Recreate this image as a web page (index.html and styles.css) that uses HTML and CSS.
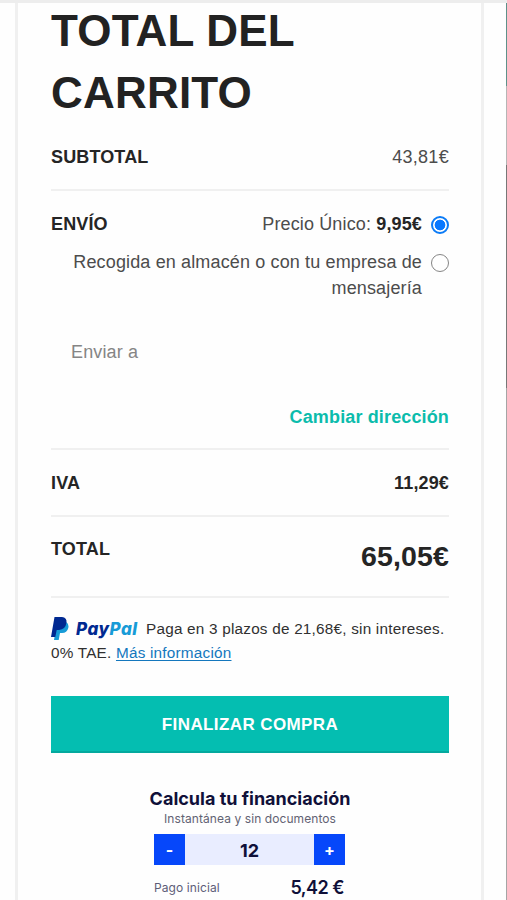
FILE: index.html
```html
<!DOCTYPE html>
<html lang="es">
<head>
<meta charset="utf-8">
<title>Total del carrito</title>
<link rel="stylesheet" href="styles.css">
</head>
<body>
<main class="page">
  <section class="cart">
    <h2 class="title">TOTAL DEL<br>CARRITO</h2>
    <div class="row subtotal"><span class="label">SUBTOTAL</span><span class="value">43,81€</span></div>
    <div class="row shipping">
      <span class="label">ENVÍO</span>
      <label class="option option-first"><span>Precio Único: <b>9,95€</b></span><i class="radio checked"></i></label>
      <label class="option option-second"><span>Recogida en almacén o con tu empresa de mensajería</span><i class="radio"></i></label>
      <p class="send">Enviar a</p>
      <a class="change">Cambiar dirección</a>
    </div>
    <div class="row iva"><span class="label">IVA</span><b class="value">11,29€</b></div>
    <div class="row total"><span class="label">TOTAL</span><b class="value grand">65,05€</b></div>
    <div class="paypal">
      <div class="pp-line">
        <svg class="pp-mark" width="18" height="23" viewBox="0 0 18 23"><path fill="#179bd7" d="M6 5h9q3.200 2 2.300 6-1.300 5-6.300 5H9l-1.300 7H3z"/><path fill="#002991" d="M3.500 0h7.500q5 .5 4.500 5.500-1 7-7.500 7.500H5.700L4.300 20H0z"/></svg>
        <span class="pp-word">Pay<em>Pal</em></span>
        <span>Paga en 3 plazos de 21,68€, sin intereses.</span>
      </div>
      <div class="pp-second">0% TAE. <a class="more">Más información</a></div>
    </div>
    <button class="checkout">FINALIZAR COMPRA</button>
    <div class="finance">
      <h3>Calcula tu financiación</h3>
      <p class="note">Instantánea y sin documentos</p>
      <div class="stepper"><span class="step">-</span><b class="months">12</b><span class="step">+</span></div>
      <div class="initial"><span class="initial-label">Pago inicial</span><b class="initial-value">5,42 €</b></div>
    </div>
  </section>
  <div class="edge"><i class="edge-top"></i><i class="edge-mid"></i></div>
</main>
</body>
</html>
```
FILE: styles.css
```css
* { box-sizing: border-box; }
body { margin: 0; background: #fefefe; font-family: "Liberation Sans", sans-serif; color: #4c4c4c; overflow: hidden; }
h2, h3, p { margin: 0; }
.page { width: 507px; height: 900px; padding-left: 15px; border-top: 3px solid #ededed; display: flex; justify-content: space-between; overflow: hidden; }
.cart { width: 469px; height: 897px; padding: 0 32px 0 33px; border-left: 3px solid #f0f0f0; border-right: 3px solid #f0f0f0; }
.title { height: 121px; margin-top: -3px; font-size: 44px; line-height: 62px; letter-spacing: .2px; color: #222; white-space: nowrap; }
.row { border-bottom: 2px solid #f0f0f0; font-size: 18px; line-height: 26px; letter-spacing: .14px; }
.subtotal, .iva, .total { display: flex; justify-content: space-between; }
.subtotal { height: 70px; padding-top: 23px; }
.subtotal .value { letter-spacing: .3px; }
.label, .row b { font-weight: 700; color: #252525; }
.shipping { height: 259px; padding-top: 20px; display: grid; grid-template-columns: 100px 1fr; align-content: start; }
.option { display: flex; justify-content: flex-end; gap: 9px; text-align: right; }
.option-second { grid-column: 1 / 3; margin-top: 12px; }
.option-second > span { width: 360px; }
.radio { width: 18px; height: 18px; margin-top: 5px; flex: none; border: 1.5px solid #858585; border-radius: 50%; background: #fff; }
.checked { border: 2px solid #0b7bf6; background: radial-gradient(circle, #0878ff 0 5px, #fff 5.700px); }
.send { grid-column: 1 / 3; margin: 38px 0 0 20px; color: #858585; }
.change { grid-column: 1 / 3; justify-self: end; margin-top: 39px; font-weight: 700; color: #0bbcac; }
.iva { height: 67px; padding-top: 20px; }
.total { height: 81px; padding-top: 19px; }
.total .grand { font-size: 28.500px; line-height: 41px; }
.paypal { height: 98px; padding-top: 18px; font-size: 15.300px; letter-spacing: .22px; color: #303030; white-space: nowrap; }
.pp-line { display: flex; line-height: 26px; }
.pp-mark { flex: none; margin: 1px 7px 0 0; }
.pp-word { width: 70px; font: italic 800 17px/27px Inter, sans-serif; letter-spacing: .5px; color: #002991; }
.pp-word em { color: #179bd7; }
.pp-second { line-height: 20px; }
.more { color: #1477bd; text-decoration: underline; text-underline-offset: 2px; }
.checkout { display: block; width: 398px; height: 57px; padding: 2px 0 0; border: 0; border-bottom: 2px solid #04a99e; background: #04beb1; color: #fff; font: 700 17px/20px "Liberation Sans", sans-serif; letter-spacing: .4px; }
.finance { width: 202px; margin: 34px auto 0; color: #101039; font-family: Inter, sans-serif; white-space: nowrap; text-align: center; }
.finance h3 { font-size: 18px; line-height: 24px; }
.note { color: #626273; font-size: 12px; line-height: 15px; letter-spacing: .08px; }
.stepper { width: 191px; height: 31px; margin: 8px 0 0 5px; display: flex; background: #e9edff; line-height: 33px; font-size: 18px; }
.step { width: 31px; background: #0647fa; color: #fff; font-weight: 700; font-size: 16px; }
.months { flex: 1; }
.initial { width: 190px; margin: 11px 0 0 5px; display: flex; justify-content: space-between; line-height: 24px; }
.initial-label { color: #5d5d78; font-size: 12px; letter-spacing: .1px; }
.initial-value { font-size: 18px; font-weight: 600; letter-spacing: -.5px; }
.edge { width: 1px; height: 900px; margin-top: -3px; background: #a5a5a5; }
.edge i { display: block; width: 1px; }
.edge-top { height: 86px; background: #5e918a; }
.edge-mid { height: 302px; background: linear-gradient(#b5b5b5 0 79px, #777 79px); }
```
